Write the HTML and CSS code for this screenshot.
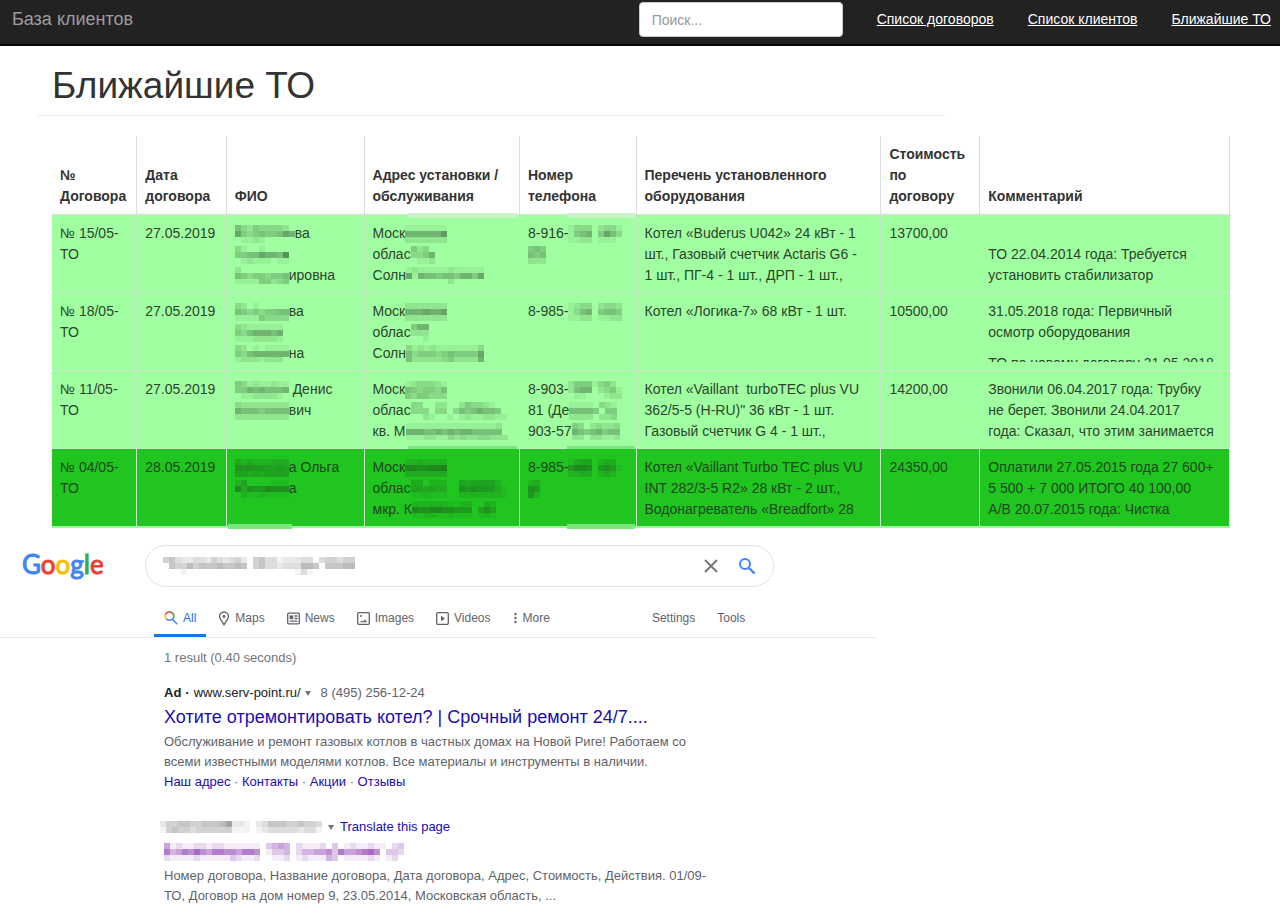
FILE: index.html
```html
<!DOCTYPE html>
<html lang="ru">
<head>
<meta charset="utf-8">
<meta name="viewport" content="width=device-width, initial-scale=1">
<title>Ближайшие ТО</title>
<link rel="stylesheet" href="styles.css">
</head>
<body>
<header class="navbar">
  <a class="brand" href="#">База клиентов</a>
  <nav class="navbar-menu">
    <input class="navbar-search" type="text" placeholder="Поиск..." aria-label="Поиск">
    <a class="navbar-link" href="#">Список договоров</a>
    <a class="navbar-link" href="#">Список клиентов</a>
    <a class="navbar-link" href="#">Ближайшие ТО</a>
  </nav>
</header>

<main class="service">
  <h1 class="page-title">Ближайшие ТО</h1>
  <table class="orders">
    <colgroup>
      <col class="c-num"><col class="c-date"><col class="c-name"><col class="c-addr"><col class="c-phone"><col class="c-equip"><col class="c-cost"><col>
    </colgroup>
    <thead>
      <tr>
        <th>№<br>Договора</th>
        <th>Дата<br>договора</th>
        <th>ФИО</th>
        <th>Адрес установки /<br>обслуживания</th>
        <th>Номер<br>телефона</th>
        <th>Перечень установленного<br>оборудования</th>
        <th>Стоимость<br>по<br>договору</th>
        <th>Комментарий</th>
      </tr>
    </thead>
    <tbody>
      <tr>
        <td><div class="cell">№ 15/05-<br>ТО</div></td>
        <td><div class="cell">27.05.2019</div></td>
        <td><div class="cell"><span data-mosaic="5324333320/7434544576/0112100000"></span>ва<br><span data-mosaic="310010000/445576659/012111011"></span><br><span data-mosaic="200000000/543443445/111144234"></span>ировна</div></td>
        <td><i class="smear smear-addr"></i><div class="cell">Моск<span data-mosaic="1111111/6666668/2222222"></span><br>облас<span data-mosaic="4230/3346/0112"></span><br>Солн<span data-mosaic="1211111211111/7165545546647/0000000200000"></span></div></td>
        <td><i class="smear smear-phone"></i><div class="cell">8-916-<span data-mosaic="133302331/145604753/112201110"></span><br><span data-mosaic="454/545/222"></span></div></td>
        <td><div class="cell">Котел «Buderus U042» 24 кВт - 1<br>шт., Газовый счетчик Actaris G6 -<br>1 шт., ПГ-4 - 1 шт., ДРП - 1 шт.,</div></td>
        <td><div class="cell">13700,00</div></td>
        <td><div class="cell"><br>ТО 22.04.2014 года: Требуется<br>установить стабилизатор</div></td>
      </tr>
      <tr>
        <td><div class="cell">№ 18/05-<br>ТО</div></td>
        <td><div class="cell">27.05.2019</div></td>
        <td><div class="cell"><span data-mosaic="320100000/543434455/111143333"></span>ва<br><span data-mosaic="32111111/43566656/11122221"></span><br><span data-mosaic="320101111/435666666/122212220"></span>на</div></td>
        <td><div class="cell">Моск<span data-mosaic="2222222/6667667/2222222"></span><br>облас<span data-mosaic="466/222/001"></span><br>Солн<span data-mosaic="3121211111113/5344434544447/5222223422226"></span></div></td>
        <td><div class="cell">8-985-<span data-mosaic="123302332/135604554/112201122"></span></div></td>
        <td><div class="cell">Котел «Логика-7» 68 кВт - 1 шт.</div></td>
        <td><div class="cell">10500,00</div></td>
        <td><div class="cell">31.05.2018 года: Первичный<br>осмотр оборудования<p class="note">ТО по новому договору 31.05.2018</p></div></td>
      </tr>
      <tr>
        <td><div class="cell">№ 11/05-<br>ТО</div></td>
        <td><div class="cell">27.05.2019</div></td>
        <td><div class="cell"><span data-mosaic="431211211/446565556/011222210"></span> Денис<br><span data-mosaic="322222222/655545555/222222222"></span>вич</div></td>
        <td><i class="smear smear-lower smear-addr"></i><div class="cell">Моск<span data-mosaic="1233321/5434435/4344333"></span><br>облас<span data-mosaic="3300220024332100/3330330354565540/0021001012112211"></span><br>кв. М<span data-mosaic="11111111111111120/66655656566555550/11122113232233222"></span></div></td>
        <td><i class="smear smear-lower smear-phone"></i><div class="cell">8-903-<span data-mosaic="244413420/256602341/011000122"></span><br>81 (Де<span data-mosaic="111103210/555540440/222202230"></span><br>903-57<span data-mosaic="430232230/654564550/220221120"></span></div></td>
        <td><div class="cell">Котел «Vaillant&nbsp; turboTEC plus VU<br>362/5-5 (H-RU)" 36 кВт - 1 шт.<br>Газовый счетчик G 4 - 1 шт.,</div></td>
        <td><div class="cell">14200,00</div></td>
        <td><div class="cell">Звонили 06.04.2017 года: Трубку<br>не берет. Звонили 24.04.2017<br>года: Сказал, что этим занимается</div></td>
      </tr>
      <tr class="overdue">
        <td><div class="cell">№ 04/05-<br>ТО</div></td>
        <td><div class="cell">28.05.2019</div></td>
        <td><i class="smear smear-lower smear-name"></i><div class="cell"><span data-mosaic="323222333/656554454/443434444"></span>а Ольга<br><span data-mosaic="240000111/736557666/021121111"></span>а</div></td>
        <td><div class="cell">Моск<span data-mosaic="2232222/7766778/3333333"></span><br>облас<span data-mosaic="3302220043444420/4434330065655531/1121110022222221"></span><br>мкр. К<span data-mosaic="222222112200320/766776655504640/112211211101210"></span></div></td>
        <td><i class="smear smear-lower smear-phone"></i><div class="cell">8-985-<span data-mosaic="134402330/577605651/223302320"></span><br><span data-mosaic="23/65/52"></span></div></td>
        <td><div class="cell">Котел «Vaillant Turbo TEC plus VU<br>INT 282/3-5 R2» 28 кВт - 2 шт.,<br>Водонагреватель «Breadfort» 28</div></td>
        <td><div class="cell">24350,00</div></td>
        <td><div class="cell">Оплатили 27.05.2015 года 27 600+<br>5 500 + 7 000 ИТОГО 40 100,00<br>А/В 20.07.2015 года: Чистка</div></td>
      </tr>
    </tbody>
  </table>
</main>

<section class="search" lang="en">
  <div class="search-head">
    <a class="logo" href="#" aria-label="Google">
      <svg width="90" height="36" viewBox="0 0 90 36"><text x="0" y="26"><tspan class="blue">G</tspan><tspan class="red">o</tspan><tspan class="yellow">o</tspan><tspan class="blue">g</tspan><tspan class="green">l</tspan><tspan class="red">e</tspan></text></svg>
    </a>
    <form class="search-box">
      <span class="query" data-mosaic="45322332432342045331222330344344/05446455565565045332333665055566/00010000000000000000001310000000"></span>
      <input class="search-input" type="text" aria-label="Search">
      <button class="icon-button" type="button" aria-label="Clear"><svg width="14" height="14" viewBox="0 0 14 14"><path d="M1 1l12 12M13 1L1 13" stroke="#70757a" stroke-width="1.8" fill="none"/></svg></button>
      <button class="icon-button" type="submit" aria-label="Search"><svg width="18" height="18" viewBox="0 0 18 18" fill="none" stroke="#4285f4" stroke-width="2"><circle cx="7" cy="7" r="5"/><path d="M10.5 10.5l6 6" stroke-width="2.4"/></svg></button>
    </form>
  </div>

  <nav class="tabs">
    <a class="tab active" href="#"><svg width="14" height="14" viewBox="0 0 14 14" fill="none" stroke-width="1.5"><path d="M2.5 8.2A4.3 4.3 0 0 1 1.5 3.5" stroke="#fbbc05"/><path d="M1.5 3.7A4.3 4.3 0 0 1 8.4 2.1" stroke="#ea4335"/><path d="M8.2 1.9A4.3 4.3 0 0 1 9 7.6" stroke="#34a853"/><path d="M2.4 8A4.3 4.3 0 0 0 9.1 7.4M8.5 8.3l4.7 4.9" stroke="#4285f4"/></svg>All</a>
    <a class="tab" href="#"><svg width="12" height="15" viewBox="0 0 12 15"><path d="M6 1a4.5 4.5 0 0 1 4.5 4.5C10.5 8 8 10 6 13.8C4 10 1.5 8 1.5 5.5A4.5 4.5 0 0 1 6 1z" fill="none" stroke="#5f6368" stroke-width="1.3"/><circle cx="6" cy="5.5" r="1.4" fill="#5f6368"/></svg>Maps</a>
    <a class="tab" href="#"><svg width="13" height="13" viewBox="0 0 13 13" fill="none" stroke="#5f6368" stroke-width="1.3"><rect x=".7" y="1.2" width="11.6" height="10.6" rx="1"/><path d="M7.5 4h3M7.5 6.5h3M2.6 9.2h7.9"/><path d="M2.6 3.4h3.6v3.8H2.6z" fill="#5f6368" stroke="none"/></svg>News</a>
    <a class="tab" href="#"><svg width="13" height="13" viewBox="0 0 13 13"><rect x=".7" y=".7" width="11.6" height="11.6" rx="1" fill="none" stroke="#5f6368" stroke-width="1.3"/><path d="M3 10.2l1.8-1.8 1.3 1 1.9-1.9 2.2 2.7z" fill="#5f6368"/><circle cx="4" cy="4" r="1" fill="#5f6368"/></svg>Images</a>
    <a class="tab" href="#"><svg width="13" height="13" viewBox="0 0 13 13"><rect x=".7" y=".7" width="11.6" height="11.6" rx="1" fill="none" stroke="#5f6368" stroke-width="1.3"/><path d="M5 3.8l4 2.700-4 2.700z" fill="#5f6368"/></svg>Videos</a>
    <a class="tab" href="#"><svg width="5" height="13" viewBox="0 0 5 13" fill="#5f6368"><circle cx="2.5" cy="2" r="1.2"/><circle cx="2.5" cy="6" r="1.2"/><circle cx="2.5" cy="10" r="1.2"/></svg>More</a>
    <a class="tab tab-settings" href="#">Settings</a>
    <a class="tab" href="#">Tools</a>
  </nav>

  <div class="results">
    <p class="stats">1 result (0.40 seconds)</p>
    <article class="result">
      <div class="source"><b>Ad</b><b>·</b><span class="url">www.serv-point.ru/</span><span class="caret"></span><span class="phone">8 (495) 256-12-24</span></div>
      <h2 class="result-title" lang="ru"><a href="#">Хотите отремонтировать котел? | Срочный ремонт 24/7....</a></h2>
      <p class="snippet" lang="ru">Обслуживание и ремонт газовых котлов в частных домах на Новой Риге! Работаем со<br>всеми известными моделями котлов. Все материалы и инструменты в наличии.</p>
      <div class="sitelinks" lang="ru"><a href="#">Наш адрес</a> · <a href="#">Контакты</a> · <a href="#">Акции</a> · <a href="#">Отзывы</a></div>
    </article>
    <article class="result">
      <div class="source"><span class="hidden-url" data-mosaic="244554455568221023555445443/145443444444111012333332331"></span><span class="caret"></span><a class="translate" href="#">Translate this page</a></div>
      <h2 class="result-title"><a class="visited" href="#" aria-label="Result"><span data-mosaic="51211221221111110345402111203012112110230/74576865776657760133402445563755678603320/21111211111321120011201211143011112101200"></span></a></h2>
      <p class="snippet" lang="ru">Номер договора, Название договора, Дата договора, Адрес, Стоимость, Действия. 01/09-<br>ТО, Договор на дом номер 9, 23.05.2014, Московская область, ...</p>
    </article>
  </div>
</section>
<script src="mosaic.js"></script>
</body>
</html>
```
FILE: styles.css
```css
* { box-sizing: border-box; }

body {
  margin: 0;
  background: #fff;
  color: #333;
  font: 14px/21px "Liberation Sans", Arial, sans-serif;
}

.mosaic { vertical-align: middle; }

/* Top bar */
.navbar {
  display: flex;
  align-items: flex-start;
  justify-content: space-between;
  height: 46px;
  padding: 2px 9px 0 12px;
  background: #222;
  border-bottom: 2px solid #080808;
}
.brand {
  color: #9d9d9d;
  font-size: 18px;
  line-height: 35px;
  text-decoration: none;
}
.navbar-menu { display: flex; align-items: center; gap: 34px; }
.navbar-search {
  width: 204px;
  height: 35px;
  padding: 0 12px;
  border: 1px solid #ccc;
  border-radius: 4px;
  background: #fff;
  font: inherit;
}
.navbar-search::placeholder { color: #999; opacity: 1; }
.navbar-link { color: #fff; line-height: 35px; }

/* Upcoming service table */
.service { padding: 18px 50px 0 52px; }
.page-title {
  width: 77%;
  margin: 0 0 20px -14px;
  padding: 0 0 7px 14px;
  border-bottom: 1px solid #eee;
  font-size: 37px;
  font-weight: 400;
  line-height: 44px;
}
.orders {
  width: 100%;
  border-collapse: collapse;
  table-layout: fixed;
  white-space: nowrap;
}
.c-num { width: 7.2%; }
.c-date { width: 7.6%; }
.c-name { width: 11.7%; }
.c-addr { width: 13.2%; }
.c-phone { width: 9.9%; }
.c-equip { width: 20.8%; }
.c-cost { width: 8.4%; }

.orders th {
  padding: 8px 8px 7px;
  border-right: 1px solid #ddd;
  border-bottom: 1px solid #ddd;
  text-align: left;
  vertical-align: bottom;
}
.orders th:first-child { padding-right: 0; }
.orders td {
  position: relative;
  padding: 8px;
  border-right: 1px solid #c8e8c8;
  border-bottom: 1px solid #c8e8c8;
  background: #a0ffa0;
  color: #2b452b;
  vertical-align: top;
}
.orders .overdue td {
  background: #20c520;
  color: #1e451e;
  border-bottom: 2px solid #a4f0a4;
}
.cell { height: 61px; overflow: hidden; }
.cell .mosaic { opacity: 0.8; }
.note { margin: 10px 0; }

.smear { position: absolute; top: -2px; height: 5px; background: #c8f5c8; }
.smear-lower { top: auto; bottom: -3px; background: #7de57d; }
.smear-addr { left: 43px; right: 2px; }
.smear-phone { left: 47px; right: 1px; }
.smear-name { left: 1px; width: 64px; }

/* Search results */
.search { padding-top: 17px; font-size: 13px; line-height: 20px; color: #5f6368; }
.search a { text-decoration: none; }
.search-head { display: flex; align-items: center; padding-left: 22px; }
.logo { width: 123px; height: 36px; }
.logo svg { overflow: visible; }
.logo text { font: 400 26px Lato, sans-serif; stroke-width: 1px; }
.blue { fill: #4285f4; stroke: #4285f4; }
.red { fill: #ea4335; stroke: #ea4335; }
.yellow { fill: #fbbc05; stroke: #fbbc05; }
.green { fill: #34a853; stroke: #34a853; }
.search-box {
  display: flex;
  align-items: center;
  gap: 20px;
  flex: 0 1 629px;
  height: 42px;
  padding: 0 17px;
  border: 1px solid #dfe1e5;
  border-radius: 21px;
}
.query { display: flex; color: #777; }
.search-input { flex: 1; min-width: 0; border: 0; outline: 0; background: none; font: inherit; }
.icon-button { display: flex; padding: 0; border: 0; background: none; }

.tabs {
  display: flex;
  gap: 22px;
  width: 877px;
  max-width: 100%;
  height: 51px;
  padding: 12px 0 0 154px;
  border-bottom: 1px solid #ebebeb;
  font-size: 12px;
}
.tab { display: flex; align-items: center; gap: 5px; height: 38px; color: #5f6368; }
.tab.active {
  margin-right: -10px;
  padding: 3px 10px 0;
  color: #1a73e8;
  border-bottom: 3px solid #1a73e8;
}
.tab-settings { margin-left: 80px; }

.results { padding: 10px 0 0 164px; }
.results p, .results h2 { margin: 0; }
.results a { color: #1a0dab; }
.stats { color: #70757a; }
.result { margin-top: 15px; }
.result + .result { margin-top: 25px; }
.source { display: flex; align-items: center; gap: 4px; }
.source b, .url { color: #202124; }
.caret { border: 3px solid transparent; border-top: 5px solid #70757a; border-bottom: 0; }
.phone { margin-left: 6px; }
.hidden-url { display: flex; margin: 0 2px 0 -4px; color: #777; }
.translate { margin-left: 2px; }
.result-title { height: 29px; font-size: 18px; font-weight: 400; line-height: 29px; }
.results .visited { display: flex; align-items: center; height: 29px; color: #7a1fa8; }
```
FILE: mosaic.js
```js
// Draws a pixelated block: each digit is the strength of one 6px cell, "/" starts a new row.
document.querySelectorAll("[data-mosaic]").forEach(function (host) {
  var ns = "http://www.w3.org/2000/svg";
  var size = 6;
  var rows = host.dataset.mosaic.split("/");
  var svg = document.createElementNS(ns, "svg");
  svg.setAttribute("class", "mosaic");
  svg.setAttribute("width", rows[0].length * size);
  svg.setAttribute("height", rows.length * size);
  rows.forEach(function (row, y) {
    row.split("").forEach(function (digit, x) {
      if (digit === "0") return;
      var cell = document.createElementNS(ns, "rect");
      cell.setAttribute("x", x * size);
      cell.setAttribute("y", y * size);
      cell.setAttribute("width", size);
      cell.setAttribute("height", size);
      cell.setAttribute("fill", "currentColor");
      cell.setAttribute("fill-opacity", digit / 12);
      svg.appendChild(cell);
    });
  });
  host.appendChild(svg);
});
```
